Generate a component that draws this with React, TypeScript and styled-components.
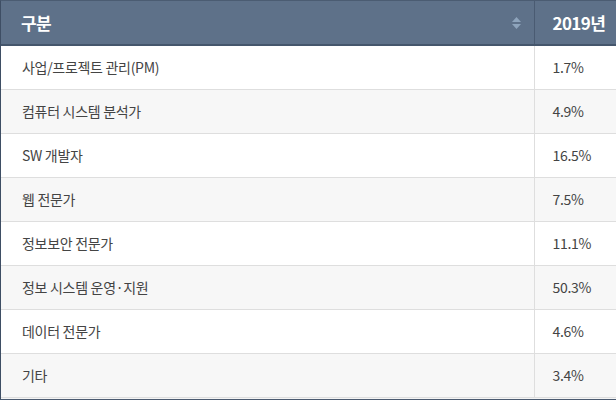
import React from "react";
import styled, { createGlobalStyle } from "styled-components";

const GlobalStyle = createGlobalStyle`
  html, body { margin: 0; padding: 0; background: #ffffff; }
  body { font-family: "Noto Sans CJK KR", "Noto Sans", sans-serif; }
`;

const Frame = styled.div`
  width: 616px;
  height: 400px;
  box-sizing: border-box;
  border-left: 1px solid #3e4e64;
  border-top: 1px solid #4b5c72;
  border-bottom: 1px solid #4a5a70;
  overflow: hidden;
  background: #f4f4f4;
`;

const Table = styled.table`
  width: 615px;
  border-collapse: collapse;
  table-layout: fixed;
`;

const HeadCell = styled.th<{ $first?: boolean }>`
  height: 43px;
  padding: 0 0 0 ${(p) => (p.$first ? "20px" : "18px")};
  background: #5e7189;
  color: #ffffff;
  font-family: "Noto Sans CJK KR", sans-serif;
  font-size: 17px;
  font-weight: 700;
  text-align: left;
  border-bottom: 2px solid #45566c;
  border-right: ${(p) => (p.$first ? "1px solid #4a5b72" : "none")};
  letter-spacing: -0.6px;
  line-height: 1;
`;

const HeadInner = styled.div`
  display: flex;
  align-items: center;
  justify-content: space-between;
  padding-right: 13px;
`;

const SortIcon = styled.svg`
  display: block;
  width: 9px;
  height: 12px;
`;

const Row = styled.tr<{ $alt?: boolean }>`
  background: ${(p) => (p.$alt ? "#f7f7f7" : "#ffffff")};
`;

const Cell = styled.td<{ $first?: boolean }>`
  height: 41px;
  padding: 0 0 2px ${(p) => (p.$first ? "21px" : "18px")};
  color: #444444;
  font-family: "Noto Sans CJK KR", sans-serif;
  font-size: 14px;
  letter-spacing: -0.3px;
  border-bottom: 1px solid #dedede;
  border-right: ${(p) => (p.$first ? "1px solid #dedede" : "none")};
  white-space: nowrap;
`;

const rows: [string, string][] = [
  ["사업/프로젝트 관리(PM)", "1.7%"],
  ["컴퓨터 시스템 분석가", "4.9%"],
  ["SW 개발자", "16.5%"],
  ["웹 전문가", "7.5%"],
  ["정보보안 전문가", "11.1%"],
  ["정보 시스템 운영·지원", "50.3%"],
  ["데이터 전문가", "4.6%"],
  ["기타", "3.4%"],
];

export default function App() {
  return (
    <>
      <GlobalStyle />
      <Frame>
        <Table>
          <colgroup>
            <col style={{ width: 533 }} />
            <col />
          </colgroup>
          <thead>
            <tr>
              <HeadCell $first>
                <HeadInner>
                  <span>구분</span>
                  <SortIcon viewBox="0 0 9 12">
                    <polygon points="4.5,0 9,5 0,5" fill="#8ea4bc" />
                    <polygon points="0,7 9,7 4.5,12" fill="#8ea4bc" />
                  </SortIcon>
                </HeadInner>
              </HeadCell>
              <HeadCell>2019년</HeadCell>
            </tr>
          </thead>
          <tbody>
            {rows.map(([name, val], i) => (
              <Row key={name} $alt={i % 2 === 1}>
                <Cell $first>{name}</Cell>
                <Cell>{val}</Cell>
              </Row>
            ))}
          </tbody>
        </Table>
      </Frame>
    </>
  );
}
